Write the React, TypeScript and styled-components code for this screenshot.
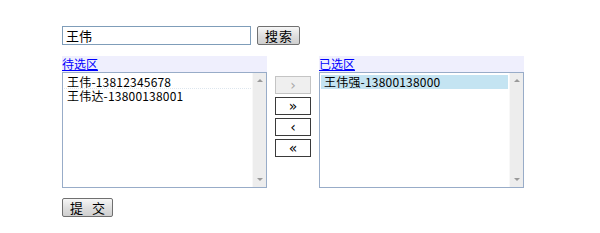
import React, { useState } from 'react'
import styled, { createGlobalStyle } from 'styled-components'

const GlobalStyle = createGlobalStyle`
    body { margin: 0; background: #fff; font-family: "Noto Sans CJK SC", "Liberation Sans", sans-serif; }
`

const Page = styled.div`
    padding: 26px 0 0 62px;
    font-size: 12px;
    color: #000;
`

const SearchRow = styled.div`
    display: flex;
    align-items: center;
    gap: 6px;
`

const SearchInput = styled.input`
    box-sizing: border-box;
    width: 189px;
    height: 19px;
    border: 1px solid #7f9db9;
    padding: 0 3px;
    font: 13px "Noto Sans CJK SC", sans-serif;
    outline: none;
`

const GreyButton = styled.button<{ $spacing: number; $w: number }>`
    box-sizing: border-box;
    width: ${p => p.$w}px;
    height: 19px;
    padding: 0;
    border: 1px solid #707070;
    border-radius: 2px;
    background: linear-gradient(#f6f6f6, #dedede 55%, #cfcfcf);
    font: 13px/16px "Noto Sans CJK SC", sans-serif;
    color: #000;
    letter-spacing: ${p => p.$spacing}px;
    text-indent: ${p => p.$spacing}px;
`

const Panels = styled.div`
    display: flex;
    margin-top: 11px;
    gap: 8px;
`

const Panel = styled.div`
    width: 205px;
    display: flex;
    flex-direction: column;
`

const PanelHead = styled.div`
    height: 16px;
    background: #efeffd;
    display: flex;
    align-items: flex-start;
`

const HeadLink = styled.a`
    color: #0000ff;
    text-decoration: underline;
    font-size: 12px;
    line-height: 15px;
`

const ListBox = styled.div`
    box-sizing: border-box;
    height: 116px;
    border: 1px solid #98acc8;
    display: flex;
    background: #fff;
`

const Items = styled.div`
    flex: 1;
    padding: 2px 1px;
`

const Item = styled.div<{ $selected?: boolean; $focus?: boolean }>`
    height: 13px;
    line-height: 14px;
    padding-left: 3px;
    white-space: nowrap;
    font-size: 12px;
    letter-spacing: 0.2px;
    background: ${p => (p.$selected ? '#c4e4f2' : 'transparent')};
    border-bottom: 1px dotted ${p => (p.$focus ? '#dde6ee' : 'transparent')};
`

const ScrollBar = styled.div`
    width: 13px;
    background: #ededed;
    border-left: 1px solid #f8f8f8;
    display: flex;
    flex-direction: column;
    justify-content: space-between;
    align-items: center;
    padding: 6px 0;
`

const Arrow = styled.div<{ $up?: boolean }>`
    width: 0;
    height: 0;
    border-left: 3px solid transparent;
    border-right: 3px solid transparent;
    ${p => (p.$up ? 'border-bottom: 3px solid #9a9a9a;' : 'border-top: 3px solid #9a9a9a;')}
`

const MoveColumn = styled.div`
    display: flex;
    flex-direction: column;
    gap: 3px;
    padding-top: 20px;
`

const MoveButton = styled.button`
    box-sizing: border-box;
    width: 36px;
    height: 18px;
    padding: 0;
    border: 1px solid #3a3a3a;
    background: #fff;
    color: #000;
    font: 14px/14px "DejaVu Sans", sans-serif;
    &:disabled {
        border-color: #c4c4c4;
        background: #efefef;
        color: #a8a8a8;
    }
`

const SubmitRow = styled.div`
    margin-top: 10px;
`

const ListPanel: React.FC<{ title: string; items: string[]; selected?: number; focus?: number }> = ({ title, items, selected, focus }) => (
    <Panel>
        <PanelHead><HeadLink href="#">{title}</HeadLink></PanelHead>
        <ListBox>
            <Items>
                {items.map((it, i) => (
                    <Item key={it} $selected={i === selected} $focus={i === focus}>{it}</Item>
                ))}
            </Items>
            <ScrollBar>
                <Arrow $up />
                <Arrow />
            </ScrollBar>
        </ListBox>
    </Panel>
)

export default function App() {
    const [keyword, setKeyword] = useState('王伟')
    return (
        <Page>
            <GlobalStyle />
            <SearchRow>
                <SearchInput value={keyword} onChange={e => setKeyword(e.target.value)} />
                <GreyButton $w={43} $spacing={1}>搜索</GreyButton>
            </SearchRow>
            <Panels>
                <ListPanel title="待选区" items={['王伟-13812345678', '王伟达-13800138001']} focus={0} />
                <MoveColumn>
                    <MoveButton disabled>›</MoveButton>
                    <MoveButton>»</MoveButton>
                    <MoveButton>‹</MoveButton>
                    <MoveButton>«</MoveButton>
                </MoveColumn>
                <ListPanel title="已选区" items={['王伟强-13800138000']} selected={0} />
            </Panels>
            <SubmitRow>
                <GreyButton $w={51} $spacing={3}>提 交</GreyButton>
            </SubmitRow>
        </Page>
    )
}
